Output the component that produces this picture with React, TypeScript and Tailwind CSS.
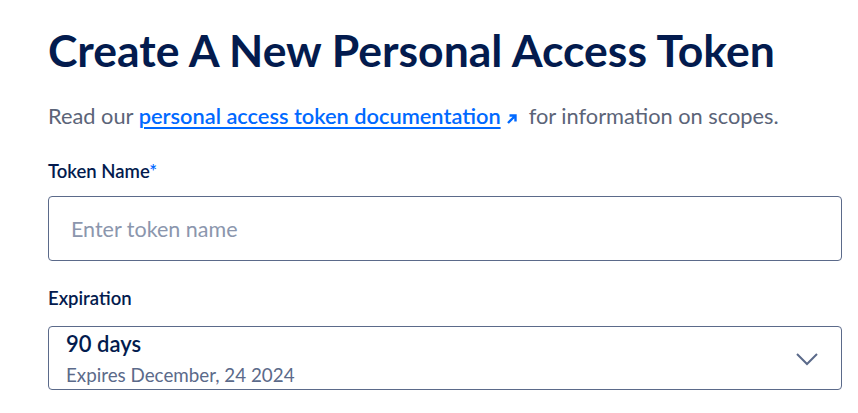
export default function App() {
  return (
    <div className="min-h-screen bg-white px-12 pt-[21px] font-['Lato','Liberation_Sans',sans-serif]">
      <h1 className="text-[44.5px] font-bold leading-[58px] text-[#031b4e]">
        Create A New Personal Access Token
      </h1>

      <p className="mt-[23px] text-[21.8px] leading-[28px] text-[#5b6478]">
        Read our{" "}
        <a href="#" className="font-semibold text-[#0069ff] underline decoration-2 underline-offset-[3px]">
          personal access token documentation
        </a>
        <svg viewBox="0 0 12 12" className="ml-[5px] mr-[11px] inline-block h-[12px] w-[12px] align-[-1px] text-[#0069ff]">
          <path d="M2 10 L9 3 M3.5 2.5 H9.5 V8.5" fill="none" stroke="currentColor" strokeWidth="2.4" />
        </svg>
        for information on scopes.
      </p>

      <div className="mt-[29px]">
        <label className="text-[18.5px] font-semibold leading-[24px] text-[#031b4e]">
          Token Name<span className="text-[#0069ff]">*</span>
        </label>
        <input
          placeholder="Enter token name"
          className="mt-[12px] block h-[65px] w-[794px] rounded-[4px] border border-[#5b6a8a] px-[22px] text-[21.5px] text-[#031b4e] outline-none placeholder:text-[#8b96ad]"
        />
      </div>

      <div className="mt-[25px]">
        <label className="text-[18.5px] font-semibold leading-[24px] text-[#031b4e]">Expiration</label>
        <div className="mt-[15px] flex h-[64px] w-[794px] items-start justify-between rounded-[4px] border border-[#5b6a8a] pl-[17px] pr-[22px] pt-[4px]">
          <div className="flex flex-col">
            <span className="text-[22px] font-semibold leading-[26px] text-[#031b4e]">90 days</span>
            <span className="mt-[6px] text-[18.8px] leading-[24px] text-[#5b6a8a]">Expires December, 24 2024</span>
          </div>
          <svg viewBox="0 0 24 14" className="mt-[21px] h-[14px] w-[24px] text-[#5b6a8a]">
            <path d="M2 2 L12 12 L22 2" fill="none" stroke="currentColor" strokeWidth="2" />
          </svg>
        </div>
      </div>
    </div>
  );
}
